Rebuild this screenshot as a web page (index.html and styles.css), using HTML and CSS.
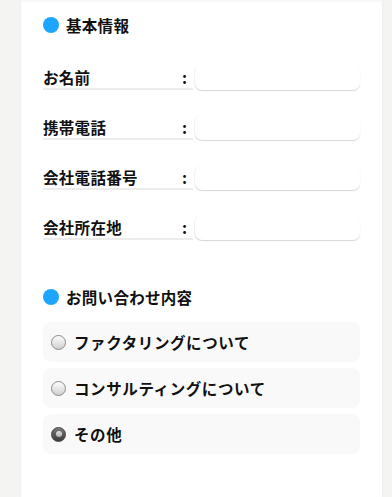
FILE: index.html
```html
<!DOCTYPE html>
<html lang="ja">
<head>
<meta charset="utf-8">
<link rel="stylesheet" href="styles.css">
</head>
<body>
<div class="card">
  <h2 class="heading"><span class="dot"></span>基本情報</h2>
  <div class="rows">
    <div class="row"><div class="label"><span>お名前</span><span class="colon">:</span></div><div class="input"></div></div>
    <div class="row"><div class="label"><span>携帯電話</span><span class="colon">:</span></div><div class="input"></div></div>
    <div class="row"><div class="label"><span>会社電話番号</span><span class="colon">:</span></div><div class="input"></div></div>
    <div class="row"><div class="label"><span>会社所在地</span><span class="colon">:</span></div><div class="input"></div></div>
  </div>
  <h2 class="heading heading2"><span class="dot"></span>お問い合わせ内容</h2>
  <div class="options">
    <div class="option"><span class="radio"></span>ファクタリングについて</div>
    <div class="option"><span class="radio"></span>コンサルティングについて</div>
    <div class="option"><span class="radio checked"></span>その他</div>
  </div>
</div>
</body>
</html>
```
FILE: styles.css
```css
html, body {
  margin: 0;
  padding: 0;
}
body {
  background: #f4f4f2;
  font-family: "Noto Sans CJK JP", "Noto Sans", sans-serif;
  color: #111;
  height: 497px;
  overflow: hidden;
}
.card {
  margin: 0 10px 0 21px;
  background: #fff;
  min-height: 497px;
  box-sizing: border-box;
  padding: 15px 22px 0 22px;
  box-shadow: 0 0 3px rgba(0,0,0,0.05), inset 0 3px 3px -2px rgba(0,0,0,0.06);
}
.heading {
  margin: 0;
  display: flex;
  align-items: center;
  font-size: 15.5px;
  line-height: 20px;
  font-weight: 700;
  letter-spacing: 0.3px;
}
.dot {
  width: 16px;
  height: 16px;
  border-radius: 50%;
  background: #1ea5ff;
  margin-right: 7px;
  flex: none;
}
.rows {
  margin-top: 30px;
  display: flex;
  flex-direction: column;
  gap: 25px;
}
.row {
  display: flex;
  height: 25px;
}
.label {
  width: 150px;
  flex: none;
  box-sizing: border-box;
  display: flex;
  justify-content: space-between;
  padding: 2px 6px 0 0;
  border-bottom: 2px solid #ececec;
  font-size: 15.5px;
  line-height: 20px;
  font-weight: 700;
  letter-spacing: 0.3px;
}
.colon {
  letter-spacing: 0;
}
.input {
  flex: 1;
  margin-left: 2px;
  background: #fff;
  border-radius: 7px;
  box-shadow: 0 1px 1px rgba(0,0,0,0.16), -1px 0 1px rgba(0,0,0,0.04);
}
.heading2 {
  margin-top: 47px;
}
.options {
  margin-top: 15px;
  display: flex;
  flex-direction: column;
  gap: 6px;
}
.option {
  height: 40px;
  background: #f9f9f9;
  border-radius: 8px;
  display: flex;
  align-items: center;
  padding-left: 8px;
  font-size: 15.5px;
  font-weight: 700;
  letter-spacing: 0.6px;
}
.radio {
  width: 15px;
  height: 15px;
  box-sizing: border-box;
  border-radius: 50%;
  border: 1px solid #8a8a8a;
  background: linear-gradient(#fdfdfd, #d0d0d0);
  margin-right: 8px;
  flex: none;
  position: relative;
}
.radio.checked {
  border-color: #444;
  background: linear-gradient(#7a7a7a, #3a3a3a);
}
.radio.checked::after {
  content: "";
  position: absolute;
  left: 3.5px;
  top: 3.5px;
  width: 6px;
  height: 6px;
  border-radius: 50%;
  background: linear-gradient(#e0e0e0, #b0b0b0);
}
```
